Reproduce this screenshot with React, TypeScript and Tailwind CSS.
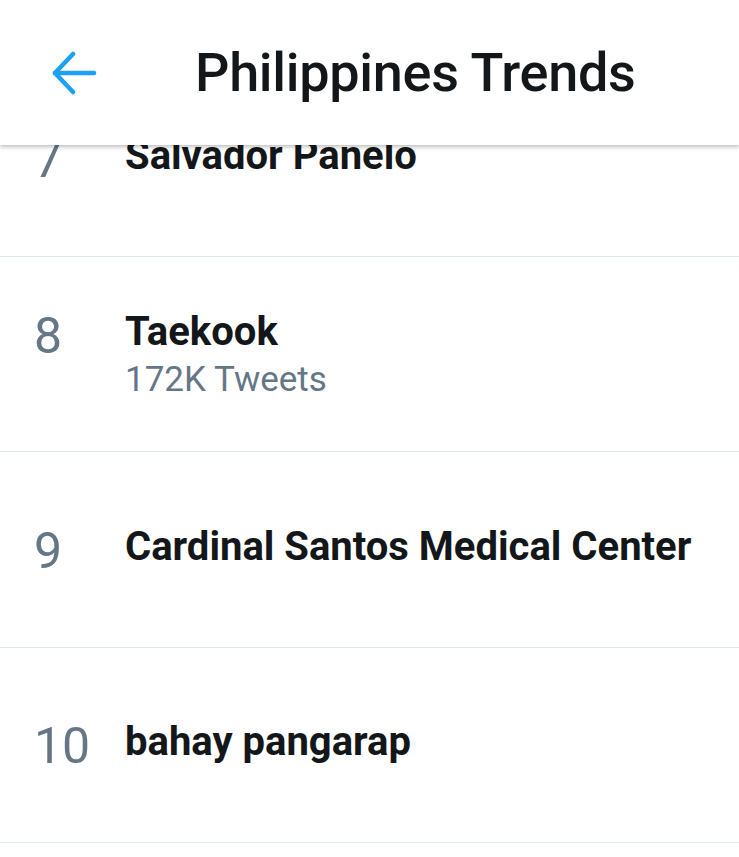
const trends = [
  { rank: 7, name: "Salvador Panelo" },
  { rank: 8, name: "Taekook", tweets: "172K Tweets" },
  { rank: 9, name: "Cardinal Santos Medical Center" },
  { rank: 10, name: "bahay pangarap" },
];

export default function App() {
  return (
    <div
      className="relative h-[857px] w-[739px] overflow-hidden bg-white"
      style={{ fontFamily: "Roboto, 'Liberation Sans', sans-serif" }}
    >
      {/* Header overlays the scrolled list */}
      <div className="absolute inset-x-0 top-0 z-10 flex h-[145px] items-center bg-white shadow-[0_2px_4px_rgba(0,0,0,0.25)]">
        <div className="flex w-[150px] items-center justify-center">
          <svg width="46" height="44" viewBox="0 0 46 44" fill="none" stroke="#1da1f2" strokeWidth="4.5" strokeLinecap="round" strokeLinejoin="round" className="-ml-[2px]">
            <path d="M43 22H4" />
            <path d="M22 3L4 22l18 19" />
          </svg>
        </div>
        <h1 className="ml-[45px] text-[54px] font-medium tracking-[-0.3px] text-[#14171a]">Philippines Trends</h1>
      </div>

      <div className="pt-[61px]">
        {trends.map((t) => (
          <div key={t.rank} className="flex h-[195.5px] items-center border-b-[1.5px] border-[#e1e8ed]">
            <div className="flex items-start">
              <div className="mt-[3px] w-[125px] pl-[34px] text-[50px] font-normal leading-none text-[#657786]">
                {t.rank}
              </div>
              <div className="flex flex-col">
                <div className="text-[40px] font-bold leading-[48px] text-[#14171a]">{t.name}</div>
                {t.tweets && (
                  <div className="mt-[4px] text-[35px] leading-[40px] text-[#657786]">{t.tweets}</div>
                )}
              </div>
            </div>
          </div>
        ))}
      </div>
    </div>
  );
}
